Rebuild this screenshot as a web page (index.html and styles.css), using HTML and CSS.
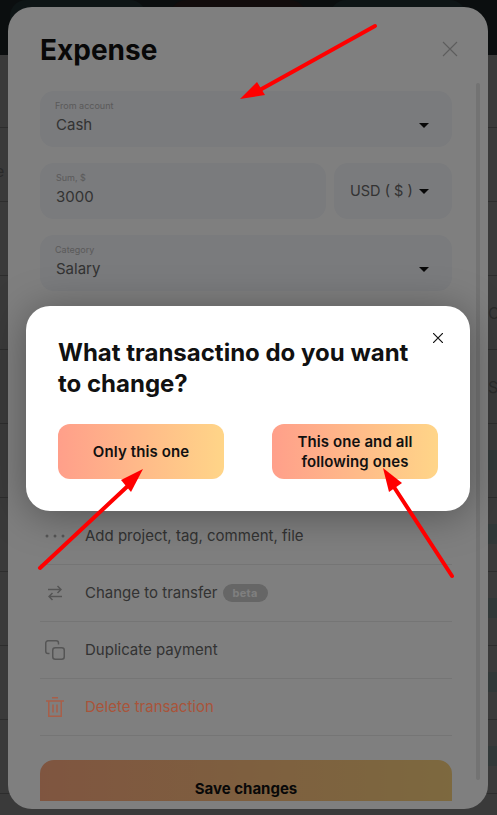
FILE: index.html
```html
<!DOCTYPE html>
<html lang="en">

<head>
    <meta charset="UTF-8">
    <meta name="viewport" content="width=device-width, initial-scale=1.0">
    <title>Expense</title>
    <link rel="stylesheet" href="styles.css">
</head>

<body>
    <!-- page behind the sheet -->
    <div class="backdrop">
        <div class="backdrop-top">
            <span class="tile"></span>
            <span class="tile tile-red"></span>
            <span class="tile"></span>
        </div>
        <div class="backdrop-list">
            <div class="backdrop-row"></div>
            <div class="backdrop-row"><span class="backdrop-edge">e</span></div>
            <div class="backdrop-row"></div>
            <div class="backdrop-row"><span class="backdrop-edge backdrop-edge-right">Ca</span></div>
            <div class="backdrop-row"><span class="backdrop-edge backdrop-edge-right">Sa</span></div>
            <div class="backdrop-row"><span class="backdrop-chip"></span></div>
            <div class="backdrop-row"><span class="backdrop-chip"></span></div>
            <div class="backdrop-row"><span class="backdrop-chip"></span></div>
            <div class="backdrop-row"><span class="backdrop-chip"></span></div>
            <div class="backdrop-row"><span class="backdrop-chip"></span></div>
        </div>
    </div>

    <div class="sheet">
        <div class="sheet-head">
            <h1>Expense</h1>
            <svg class="sheet-close" width="16" height="16" viewBox="0 0 16 16" fill="none" stroke="#bbb" stroke-width="1.2">
                <path d="M1 1l14 14M15 1L1 15" />
            </svg>
        </div>
        <div class="sheet-body">
            <div class="field">
                <div class="field-text">
                    <span class="field-label">From account</span>
                    <span class="field-value">Cash</span>
                </div>
                <span class="caret"></span>
            </div>
            <div class="field-row">
                <div class="field field-sum">
                    <div class="field-text">
                        <span class="field-label">Sum, $</span>
                        <span class="field-value">3000</span>
                    </div>
                </div>
                <div class="field field-currency">
                    <span class="field-value">USD ( $ )</span>
                    <span class="caret"></span>
                </div>
            </div>
            <div class="field">
                <div class="field-text">
                    <span class="field-label">Category</span>
                    <span class="field-value">Salary</span>
                </div>
                <span class="caret"></span>
            </div>

            <div class="hidden-rows"></div>

            <div class="action">
                <span class="action-icon">
                    <svg width="20" height="4" viewBox="0 0 20 4" fill="#aaa">
                        <circle cx="2" cy="2" r="1.5" />
                        <circle cx="10" cy="2" r="1.5" />
                        <circle cx="18" cy="2" r="1.5" />
                    </svg>
                </span>
                <span>Add project, tag, comment, file</span>
            </div>
            <div class="action">
                <span class="action-icon">
                    <svg width="14" height="16" viewBox="0 0 14 16" fill="none" stroke="#aaa" stroke-width="1.5">
                        <path d="M0 4.5h13M9.5 1L13 4.5 9.5 8" />
                        <path d="M14 11.5H1M4.5 8L1 11.5 4.5 15" />
                    </svg>
                </span>
                <span>Change to transfer</span>
                <span class="badge">beta</span>
            </div>
            <div class="action">
                <span class="action-icon">
                    <svg width="20" height="20" viewBox="0 0 20 20" fill="none" stroke="#aaa" stroke-width="1.5">
                        <rect x="7.75" y="7.75" width="11.5" height="11.5" rx="2.5" />
                        <path d="M4.5 13.5H3A2.25 2.25 0 0 1 .75 11.25V3A2.25 2.25 0 0 1 3 .75h8.25A2.25 2.25 0 0 1 13.5 3v1.5" />
                    </svg>
                </span>
                <span>Duplicate payment</span>
            </div>
            <div class="action action-danger">
                <span class="action-icon">
                    <svg width="18" height="20" viewBox="0 0 18 20" fill="none" stroke="#a85f49" stroke-width="1.5">
                        <path d="M0 4h18M6 .75h6M2.75 4v15.25h12.5V4M7 7.5v8M11 7.5v8" />
                    </svg>
                </span>
                <span>Delete transaction</span>
            </div>

            <button class="save" type="button">Save changes</button>
        </div>
        <div class="scrollbar"></div>
    </div>

    <div class="overlay"></div>

    <div class="dialog">
        <svg class="dialog-close" width="10" height="10" viewBox="0 0 10 10" fill="none" stroke="#111" stroke-width="1.2">
            <path d="M0 0l10 10M10 0L0 10" />
        </svg>
        <h2>What transactino do you want to change?</h2>
        <div class="dialog-buttons">
            <button class="choice" type="button">Only this one</button>
            <button class="choice" type="button">This one and all following ones</button>
        </div>
    </div>

    <!-- red arrows drawn on top of the screenshot -->
    <svg class="arrows" width="497" height="815" viewBox="0 0 497 815">
        <g stroke="#ff0000" stroke-width="4" stroke-linecap="round" fill="none">
            <path d="M375 26L258 91" />
            <path d="M40 568L131 483" />
            <path d="M452 576L392 484" />
        </g>
        <g fill="#ff0000">
            <path d="M240 99L257 82 265 95z" />
            <path d="M143 469L131 492 121 480z" />
            <path d="M383 468L402 483 389 492z" />
        </g>
    </svg>
</body>

</html>
```

FILE: styles.css
```css
* {
    box-sizing: border-box;
}

html,
body {
    height: 100%;
}

body {
    margin: 0;
    overflow: hidden;
    position: relative;
    font-family: Inter, "Liberation Sans", sans-serif;
    color: #666;
    background-color: #757575;
}

.backdrop {
    position: absolute;
    inset: 0;
    display: flex;
    flex-direction: column;
}

.backdrop-top {
    height: 55px;
    flex-shrink: 0;
    padding-left: 10px;
    background-color: #161c1e;
    display: flex;
    gap: 24px;
    overflow: hidden;
}

.tile {
    width: 136px;
    height: 40px;
    background-color: #1c2a2c;
    border-radius: 16px 16px 0 0;
}

.tile-red {
    background-color: #241818;
}

.backdrop-list {
    margin-top: -1px;
}

.backdrop-row {
    height: 74px;
    border-bottom: 1px solid #5a5a5a;
    position: relative;
    font-size: 16px;
    color: #555;
}

.backdrop-edge {
    position: absolute;
    left: -5px;
    top: 33px;
}

.backdrop-edge-right {
    left: 488px;
    top: 27px;
}

.backdrop-chip {
    position: absolute;
    right: 0;
    top: 26px;
    width: 9px;
    height: 20px;
    background-color: #637070;
}

.sheet {
    position: absolute;
    left: 8px;
    top: 7px;
    width: 480px;
    height: 802px;
    background-color: #fff;
    border-radius: 24px;
    overflow: hidden;
}

.sheet-head {
    display: flex;
    justify-content: space-between;
    align-items: flex-start;
    padding: 23px 30px 0 32px;
    height: 84px;
}

.sheet-head h1 {
    margin: 0;
    font-size: 28px;
    line-height: 40px;
    font-weight: 700;
    color: #111;
}

.sheet-close {
    margin-top: 11px;
}

.sheet-body {
    padding: 0 36px 0 32px;
    height: 710px;
    overflow: hidden;
}

.field {
    height: 56px;
    margin-bottom: 16px;
    padding: 0 23px 0 16px;
    background-color: #f4f6fa;
    border-radius: 14px;
    display: flex;
    align-items: center;
    justify-content: space-between;
}

.field-text {
    display: flex;
    flex-direction: column;
    padding-bottom: 2px;
}

.field-label {
    font-size: 9px;
    line-height: 12px;
    margin-bottom: 1px;
    margin-left: -1px;
    color: #b5b5b5;
}

.field-sum .field-label {
    margin-left: 0;
}

.field-value {
    font-size: 15px;
    line-height: 24px;
    color: #666;
}

.field-row {
    display: flex;
    gap: 8px;
}

.field-sum {
    flex: 1;
}

.field-currency {
    width: 118px;
}

.field-currency .field-value {
    font-size: 14.5px;
}

.caret {
    width: 0;
    height: 0;
    margin-top: 12px;
    border-left: 5px solid transparent;
    border-right: 5px solid transparent;
    border-top: 5px solid #111;
}

.field-currency .caret {
    margin-top: 0;
}

.hidden-rows {
    height: 201px;
}

.action {
    height: 57px;
    padding-bottom: 1px;
    display: flex;
    align-items: center;
    border-bottom: 1px solid #eaeaea;
    font-size: 15px;
}

.action-icon {
    width: 30px;
    margin-right: 15px;
    display: flex;
    align-items: center;
    justify-content: center;
}

/* the red is brighter than the overlay lets through, so it sits above it */
.action-danger span {
    position: relative;
    z-index: 1;
    color: #a9543a;
}

.badge {
    margin-left: 5px;
    padding: 0 10px;
    height: 18px;
    line-height: 18px;
    font-size: 11px;
    font-weight: 700;
    letter-spacing: 0.3px;
    color: #fff;
    background-color: #ccc;
    border-radius: 9px;
}

.save {
    display: block;
    width: 100%;
    height: 58px;
    margin-top: 24px;
    padding: 0 0 2px 0;
    border: none;
    border-radius: 14px 14px 0 0;
    background-image: linear-gradient(90deg, #ffab80, #fad27e);
    font-family: inherit;
    font-size: 15px;
    font-weight: 700;
    color: #111;
}

.scrollbar {
    position: absolute;
    right: 8px;
    top: 76px;
    width: 4px;
    height: 697px;
    background-color: #e6e6e6;
    border-radius: 2px;
}

.overlay {
    position: absolute;
    inset: 0;
    background-color: rgba(0, 0, 0, 0.5);
}

.dialog {
    position: absolute;
    left: 26px;
    top: 306px;
    width: 444px;
    height: 205px;
    padding: 31px 32px 0 32px;
    background-color: #fff;
    border-radius: 24px;
    box-shadow: 0 4px 40px rgba(0, 0, 0, 0.35);
}

.dialog-close {
    position: absolute;
    right: 27px;
    top: 27px;
}

.dialog h2 {
    margin: 0;
    max-width: 360px;
    font-size: 24px;
    line-height: 31px;
    font-weight: 700;
    color: #111;
}

.dialog-buttons {
    display: flex;
    justify-content: space-between;
    margin-top: 25px;
}

.choice {
    width: 166px;
    height: 55px;
    padding: 0 20px;
    border: none;
    border-radius: 12px;
    background-image: linear-gradient(90deg, #ff9f8a, #ffd588);
    font-family: inherit;
    font-size: 15px;
    line-height: 20px;
    font-weight: 600;
    letter-spacing: 0.1px;
    color: #111;
}

.arrows {
    position: absolute;
    left: 0;
    top: 0;
}
```
